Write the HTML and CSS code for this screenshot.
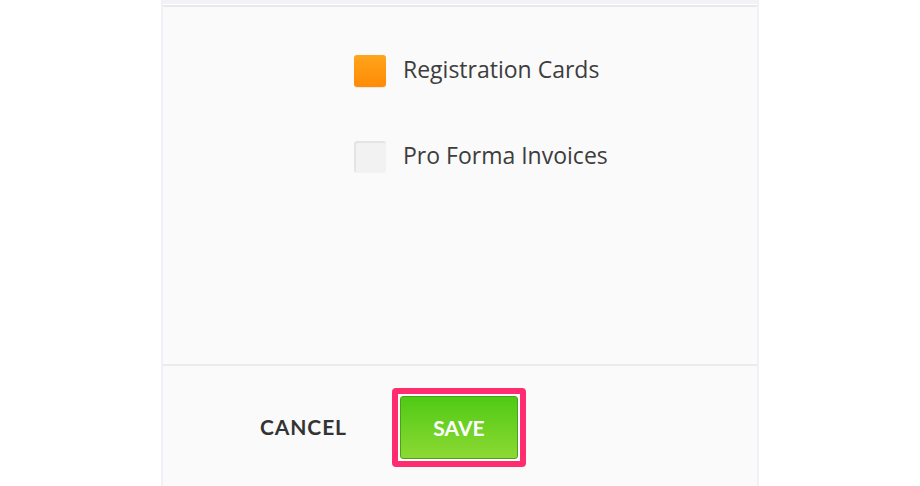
FILE: index.html
```html
<!DOCTYPE html>
<html lang="en">
<head>
    <meta charset="UTF-8">
    <meta name="viewport" content="width=device-width, initial-scale=1.0">
    <title>Print Options</title>
    <link rel="stylesheet" href="styles.css">
</head>
<body>
    <div class="panel">
        <div class="panel-top"></div>

        <div class="options">
            <label class="option">
                <span class="check checked"></span>
                <span class="option-label">Registration Cards</span>
            </label>
            <label class="option">
                <span class="check"></span>
                <span class="option-label">Pro Forma Invoices</span>
            </label>
        </div>

        <div class="footer">
            <button class="btn-cancel">CANCEL</button>
            <div class="highlight">
                <button class="btn-save">SAVE</button>
            </div>
        </div>
    </div>
</body>
</html>
```

FILE: styles.css
```css
body {
    margin: 0;
    background: #ffffff;
    font-family: "Open Sans", Lato, sans-serif;
}

.panel {
    width: 594px;
    height: 486px;
    margin: 0 auto;
    background: #fafafa;
    border-left: 2px solid #f1f0f6;
    border-right: 2px solid #f1f0f6;
    box-sizing: content-box;
}

.panel-top {
    height: 4px;
    background: #f3f2f7;
    border-bottom: 1px solid #ffffff;
    box-shadow: 0 2px 0 #e8e8e8;
}

.options {
    height: 361px;
    padding: 50px 0 0 191px;
    box-sizing: border-box;
    border-bottom: 2px solid #ebebeb;
}

.option {
    display: flex;
    align-items: center;
    gap: 17px;
    height: 32px;
    margin-bottom: 54px;
    cursor: pointer;
}

.check {
    width: 32px;
    height: 32px;
    border-radius: 3px;
    background: #f2f2f2;
    box-shadow: inset 2px 2px 1px rgba(0, 0, 0, 0.06);
}

.check.checked {
    background: linear-gradient(#ffa51b, #ff8a06);
    box-shadow: 0 1px 1px rgba(0, 0, 0, 0.08);
}

.option-label {
    font-size: 23px;
    line-height: 32px;
    padding-bottom: 4px;
    color: #3d3d3d;
}

.footer {
    display: flex;
    align-items: center;
    padding: 22px 0 0 97px;
}

.btn-cancel {
    border: none;
    background: none;
    padding: 0 0 3px;
    font-family: Lato, sans-serif;
    font-size: 21px;
    font-weight: bold;
    color: #333333;
    letter-spacing: 0.9px;
    margin-right: 45px;
}

.highlight {
    padding: 2px;
    border: 6px solid #ff2d6f;
    border-radius: 4px;
    background: #ffffff;
}

.btn-save {
    display: block;
    width: 118px;
    height: 63px;
    padding-bottom: 2px;
    border: 1px solid #4aa21c;
    border-radius: 3px;
    background: linear-gradient(#4fca14, #8dd933);
    color: #ffffff;
    font-family: Lato, sans-serif;
    font-size: 21px;
    font-weight: bold;
    cursor: pointer;
}
```
